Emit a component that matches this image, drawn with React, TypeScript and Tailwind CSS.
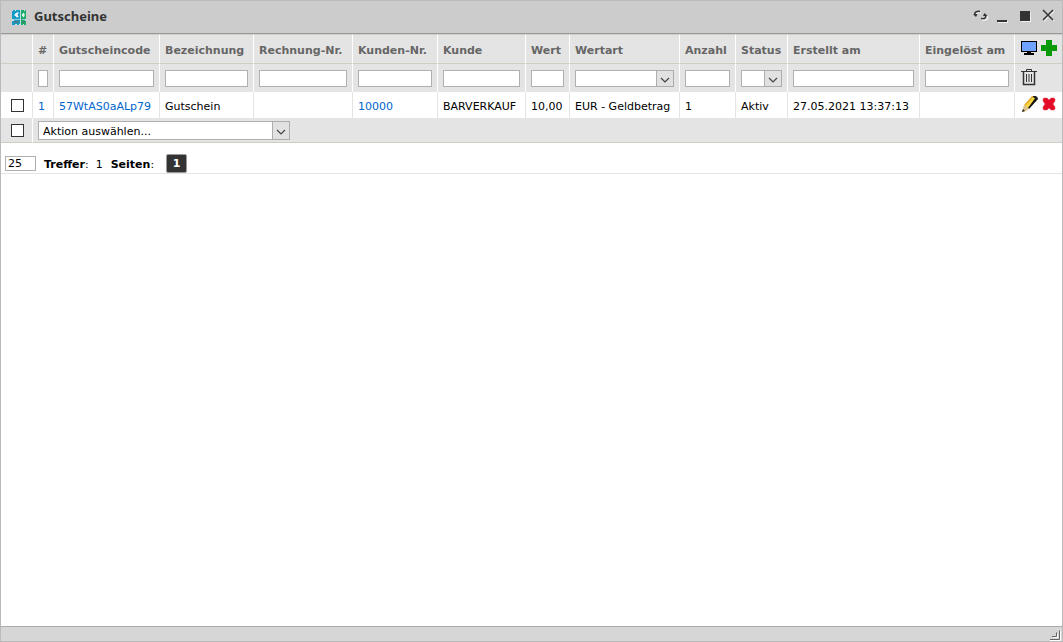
import type { ReactNode } from 'react';

const columns = [
  { label: '#', value: '1', link: true, width: 'w-[21px]' },
  { label: 'Gutscheincode', value: '57WtAS0aALp79', link: true, width: 'w-[106px]' },
  { label: 'Bezeichnung', value: 'Gutschein', width: 'w-[94px]' },
  { label: 'Rechnung-Nr.', value: '', width: 'w-[99px]' },
  { label: 'Kunden-Nr.', value: '10000', link: true, width: 'w-[85px]' },
  { label: 'Kunde', value: 'BARVERKAUF', width: 'w-[88px]' },
  { label: 'Wert', value: '10,00', width: 'w-[44px]' },
  { label: 'Wertart', value: 'EUR - Geldbetrag', select: true, width: 'w-[110px]' },
  { label: 'Anzahl', value: '1', width: 'w-[56px]' },
  { label: 'Status', value: 'Aktiv', select: true, width: 'w-[52px]' },
  { label: 'Erstellt am', value: '27.05.2021 13:37:13', width: 'w-[132px]' },
  { label: 'Eingelöst am', value: '', width: 'w-[95px]' },
];

function Select({ label, options, size }: { label: string; options: string[]; size: string }) {
  return (
    <div className={`relative ${size}`}>
      <select
        aria-label={label}
        className="block w-full h-full appearance-none border border-[#b0b0b0] bg-white pl-1 pr-5 pt-[2px] text-[11px] leading-4 text-black"
      >
        {options.map((option) => (
          <option key={option}>{option}</option>
        ))}
      </select>
      <span className="pointer-events-none absolute inset-y-0 right-0 flex w-[18px] items-center justify-center border border-[#adadad] bg-[#e1e1e1] pt-[3px]">
        <svg width="10" height="6" viewBox="0 0 10 6" fill="none" stroke="#444" strokeWidth="1.2">
          <path d="M1 1l4 4 4-4" />
        </svg>
      </span>
    </div>
  );
}

function Checkbox({ label }: { label: string }) {
  return (
    <input
      type="checkbox"
      aria-label={label}
      className="ml-[10px] block size-[13px] appearance-none border border-[#333] bg-white checked:bg-[#333]"
    />
  );
}

function IconButton({ label, children }: { label: string; children: ReactNode }) {
  return (
    <button type="button" aria-label={label} title={label} className="block shrink-0">
      {children}
    </button>
  );
}

function TitleBar() {
  return (
    <header className="flex h-[33px] shrink-0 items-center border-b border-[#999] bg-[#ccc] pl-[11px] pr-[7px]">
      <svg width="14" height="15" viewBox="0 0 14 15">
        <path d="M1 0h8v15H0V1z" fill="#169bc5" />
        <path d="M9 0h5v15H9z" fill="#1bab6b" />
        <path d="M0 0h1v1H0zM3 0h1v1H3zM0 9h2v2H0zM3 14h2v1H3zM7 14h2v1H7zM12 0h1v1h-1zM13 9h1v2h-1zM11 14h1v1h-1z" fill="#d5e6ea" />
        <path d="M8 0h1v15H8z" fill="#c4dde2" />
        <path d="M6.500 3Q3 3 4 5.500 5 7.500 6.500 6.500M2.500 5H6" fill="none" stroke="#fff" strokeWidth="1.300" />
        <path d="M12 3L10.500 5l1.500 2M10 5h3" fill="none" stroke="#fff" strokeWidth="1.200" />
        <path d="M1 9.500h7M10 9.500h3" stroke="#8dc9da" />
        <path d="M2 11h5v2H2z" fill="#477f92" />
        <path d="M10 11h3v2h-3z" fill="#3f8a67" />
      </svg>
      <h1 className="ml-2 pb-[2px] font-['Noto_Sans',sans-serif] text-[13px] font-bold leading-4 text-[#333]">Gutscheine</h1>
      <div className="ml-auto flex items-center gap-2 pb-1">
        <IconButton label="Aktualisieren">
          <svg width="16" height="16" viewBox="0 0 16 16" fill="none">
            <g stroke="#eee" strokeWidth="1.500" transform="translate(1 1)">
              <path d="M2 8C1 5.500 4 4 7 5M13 8c2 3-1 5-5 4" />
            </g>
            <path d="M2 8C1 5 4 4 7 4.500M12.500 8c1 3-1 4-4.500 3.500" stroke="#333" strokeWidth="1.500" />
            <path d="M0 7h4.500L3 10zM14.500 9H10l1.500-3z" fill="#333" />
          </svg>
        </IconButton>
        <IconButton label="Minimieren">
          <svg width="14" height="16" viewBox="0 0 14 16">
            <path d="M1 14h10v2H1z" fill="#eee" />
            <path d="M0 13h10v2H0z" fill="#333" />
          </svg>
        </IconButton>
        <IconButton label="Maximieren">
          <svg width="14" height="16" viewBox="0 0 14 16">
            <path d="M2 5h10v10H2z" fill="#eee" />
            <path d="M1 4h10v10H1z" fill="#333" />
          </svg>
        </IconButton>
        <IconButton label="Schließen">
          <svg width="14" height="16" viewBox="0 0 14 16" fill="none">
            <path d="M3 4l10 10M13 4L3 14" stroke="#eee" strokeWidth="1.500" />
            <path d="M2 3l10 10M12 3L2 13" stroke="#333" strokeWidth="1.500" />
          </svg>
        </IconButton>
      </div>
    </header>
  );
}

export default function App() {
  return (
    <div className="flex h-screen flex-col border border-[#bababa] bg-white font-['Verdana','DejaVu_Sans',sans-serif] text-[11px] leading-4 text-black">
      <TitleBar />

      <main className="min-h-0 flex-1 overflow-auto">
        <table className="w-full table-fixed border-separate border-spacing-0 whitespace-nowrap text-left">
          <colgroup>
            <col className="w-[32px]" />
            {columns.map((col) => (
              <col key={col.label} className={col.width} />
            ))}
            <col className="w-[47px]" />
          </colgroup>
          <thead className="bg-[#e4e4e4] text-[#666]">
            <tr className="h-[30px]">
              <th className="border-y border-r border-y-[#d1cdc5] border-r-white" />
              {columns.map((col) => (
                <th key={col.label} scope="col" className="border-y border-r border-y-[#d1cdc5] border-r-white pl-[5px] pt-1 font-bold">
                  {col.label}
                </th>
              ))}
              <th className="border-y border-[#d1cdc5]">
                <div className="flex items-center gap-1 pb-[2px] pl-[6px]">
                  <IconButton label="Ansicht">
                    <svg width="16" height="16" viewBox="0 0 16 16">
                      <path d="M0 1h16v11H0z" fill="#000" />
                      <path d="M1 2h14v9H1z" fill="#6fa3ff" />
                      <path d="M6 12h4v1h3v2H3v-2h3z" fill="#000" />
                    </svg>
                  </IconButton>
                  <IconButton label="Neu">
                    <svg width="16" height="16" viewBox="0 0 16 16">
                      <path d="M5 0h6v5h5v6h-5v5H5v-5H0V5h5z" fill="#099909" />
                    </svg>
                  </IconButton>
                </div>
              </th>
            </tr>
            <tr className="h-[28px]">
              <td className="border-r border-white" />
              {columns.map((col) => (
                <td key={col.label} className="border-r border-white px-[5px]">
                  {col.select ? (
                    <Select label={col.label} options={['', col.value]} size="h-[17px]" />
                  ) : (
                    <input
                      type="text"
                      aria-label={col.label}
                      className="block h-[17px] w-full border border-[#b0b0b0] bg-white"
                    />
                  )}
                </td>
              ))}
              <td className="pb-[2px] pl-[6px]">
                <IconButton label="Filter löschen">
                  <svg width="16" height="17" viewBox="0 0 16 17" fill="none" stroke="#333">
                    <path d="M5.500 2V.5h5V2M0 2.500h16" />
                    <path d="M2.500 3v12.500h11V3" strokeWidth="1.500" />
                    <path d="M5.500 5v8M8 5v8M10.500 5v8" />
                  </svg>
                </IconButton>
              </td>
            </tr>
          </thead>
          <tbody>
            <tr className="h-[26px]">
              <td className="border-r border-[#e4e4e4]">
                <Checkbox label="Gutschein 1 auswählen" />
              </td>
              {columns.map((col) => (
                <td key={col.label} className="border-r border-[#e4e4e4] pl-[5px] pt-1">
                  {col.link ? (
                    <a href="#" className="text-[#0066cc]">{col.value}</a>
                  ) : (
                    col.value
                  )}
                </td>
              ))}
              <td>
                <div className="flex items-center gap-1 pb-[2px] pl-[7px]">
                  <IconButton label="Bearbeiten">
                    <svg width="16" height="16" viewBox="0 0 16 16">
                      <path d="M3 9L12 0l4 3-9 10z" fill="#111" />
                      <path d="M2 9L10 0h2L4 10z" fill="#e3a92a" />
                      <path d="M3 10L12 0l2 1-8 11z" fill="#f9d63f" />
                      <path d="M11 0h3l2 2-1 2-4-3z" fill="#222" />
                      <path d="M2 9l5 4-5 3H0z" fill="#dcc08c" />
                      <path d="M0 16l1-3 2 2z" fill="#222" />
                    </svg>
                  </IconButton>
                  <IconButton label="Löschen">
                    <svg width="14" height="14" viewBox="0 0 14 14">
                      <path d="M2 1h3l2 2 2-2h3l1 1v2l-2 3 2 3v2l-1 1H9l-2-2-2 2H2l-1-1v-2l2-3-2-3V2z" fill="#e40d28" stroke="#ef4155" strokeWidth=".5" />
                    </svg>
                  </IconButton>
                </div>
              </td>
            </tr>
          </tbody>
          <tfoot className="bg-[#e4e4e4]">
            <tr className="h-[25px]">
              <td className="border-b border-r border-b-[#d1cdc5] border-r-white">
                <Checkbox label="Alle auswählen" />
              </td>
              <td colSpan={13} className="border-b border-[#d1cdc5] pl-[5px]">
                <Select label="Aktion" options={['Aktion auswählen...']} size="h-[19px] w-[252px]" />
              </td>
            </tr>
          </tfoot>
        </table>

        <div className="flex h-[31px] items-end border-b border-[#e4e4e4] pl-1">
          <input
            type="text"
            aria-label="Treffer pro Seite"
            defaultValue="25"
            className="mb-[2px] h-[15px] w-[31px] border border-[#b0b0b0] bg-white px-[2px]"
          />
          <p className="ml-2"><b>Treffer</b>: &nbsp;1</p>
          <p className="ml-2"><b>Seiten</b>:</p>
          <button type="button" className="ml-3 h-[19px] w-[21px] rounded-xs border border-[#999] bg-[#333] font-bold text-white">
            1
          </button>
        </div>
      </main>

      <footer className="flex h-[15px] shrink-0 items-end justify-end border-t border-[#aaa] bg-[#d6d6d6] pr-[1px]">
        <svg width="12" height="12" viewBox="0 0 12 12" fill="none">
          <path d="M1 11.500h10.500V2M4 8.500h4.500V5" stroke="#fff" />
          <path d="M1 10.500h9.500V1.500M3 7.500h4.500V3.500" stroke="#666" />
        </svg>
      </footer>
    </div>
  );
}
